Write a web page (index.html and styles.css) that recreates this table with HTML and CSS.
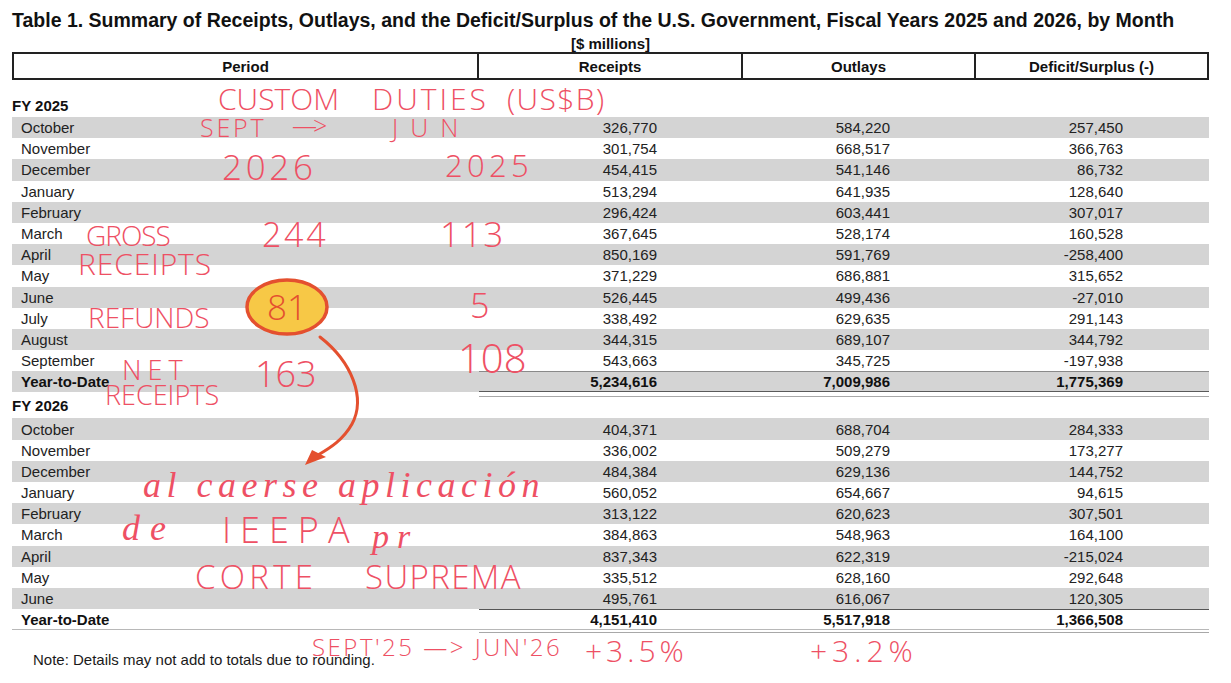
FILE: index.html
```html
<!DOCTYPE html>
<html lang="en">
<head>
<meta charset="utf-8">
<title>Table 1. Summary of Receipts, Outlays, and the Deficit/Surplus</title>
<link rel="stylesheet" href="styles.css">
</head>
<body>
<div class="page">
  <h1 class="title">Table 1. Summary of Receipts, Outlays, and the Deficit/Surplus of the U.S. Government, Fiscal Years 2025 and 2026, by Month</h1>
  <div class="units">[$ millions]</div>
  <table class="data">
    <colgroup><col class="c1"><col class="c2"><col class="c3"><col class="c4"></colgroup>
    <thead>
      <tr><th>Period</th><th>Receipts</th><th>Outlays</th><th>Deficit/Surplus (-)</th></tr>
    </thead>
    <tbody>
      <tr class="fy"><td colspan="4">FY 2025</td></tr>
      <tr class="g"><td class="m">October</td><td class="n">326,770</td><td class="n">584,220</td><td class="n">257,450</td></tr>
      <tr><td class="m">November</td><td class="n">301,754</td><td class="n">668,517</td><td class="n">366,763</td></tr>
      <tr class="g"><td class="m">December</td><td class="n">454,415</td><td class="n">541,146</td><td class="n">86,732</td></tr>
      <tr><td class="m">January</td><td class="n">513,294</td><td class="n">641,935</td><td class="n">128,640</td></tr>
      <tr class="g"><td class="m">February</td><td class="n">296,424</td><td class="n">603,441</td><td class="n">307,017</td></tr>
      <tr><td class="m">March</td><td class="n">367,645</td><td class="n">528,174</td><td class="n">160,528</td></tr>
      <tr class="g"><td class="m">April</td><td class="n">850,169</td><td class="n">591,769</td><td class="n">-258,400</td></tr>
      <tr><td class="m">May</td><td class="n">371,229</td><td class="n">686,881</td><td class="n">315,652</td></tr>
      <tr class="g"><td class="m">June</td><td class="n">526,445</td><td class="n">499,436</td><td class="n">-27,010</td></tr>
      <tr><td class="m">July</td><td class="n">338,492</td><td class="n">629,635</td><td class="n">291,143</td></tr>
      <tr class="g"><td class="m">August</td><td class="n">344,315</td><td class="n">689,107</td><td class="n">344,792</td></tr>
      <tr><td class="m">September</td><td class="n">543,663</td><td class="n">345,725</td><td class="n">-197,938</td></tr>
      <tr class="g ytd"><td class="m">Year-to-Date</td><td class="n">5,234,616</td><td class="n">7,009,986</td><td class="n">1,775,369</td></tr>
      <tr class="rule"><td></td><td class="n"></td><td class="n"></td><td class="n"></td></tr>
      <tr class="fy fy2"><td colspan="4">FY 2026</td></tr>
      <tr class="g"><td class="m">October</td><td class="n">404,371</td><td class="n">688,704</td><td class="n">284,333</td></tr>
      <tr><td class="m">November</td><td class="n">336,002</td><td class="n">509,279</td><td class="n">173,277</td></tr>
      <tr class="g"><td class="m">December</td><td class="n">484,384</td><td class="n">629,136</td><td class="n">144,752</td></tr>
      <tr><td class="m">January</td><td class="n">560,052</td><td class="n">654,667</td><td class="n">94,615</td></tr>
      <tr class="g"><td class="m">February</td><td class="n">313,122</td><td class="n">620,623</td><td class="n">307,501</td></tr>
      <tr><td class="m">March</td><td class="n">384,863</td><td class="n">548,963</td><td class="n">164,100</td></tr>
      <tr class="g"><td class="m">April</td><td class="n">837,343</td><td class="n">622,319</td><td class="n">-215,024</td></tr>
      <tr><td class="m">May</td><td class="n">335,512</td><td class="n">628,160</td><td class="n">292,648</td></tr>
      <tr class="g"><td class="m">June</td><td class="n">495,761</td><td class="n">616,067</td><td class="n">120,305</td></tr>
      <tr class="ytd ytd2"><td class="m">Year-to-Date</td><td class="n">4,151,410</td><td class="n">5,517,918</td><td class="n">1,366,508</td></tr>
      <tr class="rule rule2"><td></td><td class="n"></td><td class="n"></td><td class="n"></td></tr>
    </tbody>
  </table>
  <p class="note">Note: Details may not add to totals due to rounding.</p>

  <svg class="ink" width="1231" height="683" viewBox="0 0 1231 683" aria-hidden="true">
    <ellipse cx="287" cy="307" rx="40" ry="27" fill="#f7c846" stroke="#e4502f" stroke-width="3.5"/>
    <path d="M320 337 C 352 362, 366 398, 352 424 C 343 440, 330 448, 318 455" fill="none" stroke="#e4502f" stroke-width="3" stroke-linecap="round"/>
    <polygon points="305,465 312,450 326,457" fill="#e4502f"/>
  </svg>
  <div class="notes">
    <span class="ann a-custom">CUSTOM</span>
    <span class="ann a-duties">DUTIES</span>
    <span class="ann a-usb">(US$B)</span>
    <span class="ann a-sept">SEPT</span>
    <span class="ann a-arrow">—&gt;</span>
    <span class="ann a-jun">JUN</span>
    <span class="ann a-2026">2026</span>
    <span class="ann a-2025">2025</span>
    <span class="ann a-gross">GROSS</span>
    <span class="ann a-244">244</span>
    <span class="ann a-113">113</span>
    <span class="ann a-rec1">RECEIPTS</span>
    <span class="ann a-81">81</span>
    <span class="ann a-refunds">REFUNDS</span>
    <span class="ann a-5">5</span>
    <span class="ann a-net">NET</span>
    <span class="ann a-rec2">RECEIPTS</span>
    <span class="ann a-163">163</span>
    <span class="ann a-108">108</span>
    <span class="ann cur a-caerse">al caerse aplicación</span>
    <span class="ann cur a-de">de</span>
    <span class="ann a-ieepa">IEEPA</span>
    <span class="ann cur a-pr">pr</span>
    <span class="ann a-corte">CORTE</span>
    <span class="ann a-suprema">SUPREMA</span>
    <span class="ann a-range">SEPT'25 —&gt; JUN'26</span>
    <span class="ann a-p35">+3.5%</span>
    <span class="ann a-p32">+3.2%</span>
  </div>
</div>
</body>
</html>
```

FILE: styles.css
```css
html, body {
  margin: 0;
  background: #ffffff;
}

body {
  font-family: "Liberation Sans", Arial, sans-serif;
  color: #1a1a1a;
}

.page {
  position: relative;
  width: 1231px;
  height: 683px;
  padding: 9px 0 0 12px;
  box-sizing: border-box;
  overflow: hidden;
}

.title {
  margin: 0;
  font-size: 19.5px;
  line-height: 22px;
  font-weight: bold;
  white-space: nowrap;
  color: #111;
}

.units {
  width: 1197px;
  margin-top: 5px;
  text-align: center;
  font-size: 15px;
  line-height: 15px;
  font-weight: bold;
  color: #111;
}

.data {
  width: 1197px;
  margin-top: 1px;
  table-layout: fixed;
  border-collapse: separate;
  border-spacing: 0;
  font-size: 15px;
  color: #222;
}

.c1 { width: 467px; }
.c2 { width: 264px; }
.c3 { width: 233px; }
.c4 { width: 233px; }

.data th {
  height: 24px;
  padding: 0;
  font-weight: bold;
  font-size: 15px;
  line-height: 17px;
  color: #111;
  text-align: center;
  border-top: 2px solid #222;
  border-bottom: 2px solid #222;
  border-right: 2px solid #222;
}

.data th:first-child {
  border-left: 2px solid #222;
}

.data td {
  padding: 0;
  line-height: 17px;
  vertical-align: middle;
  white-space: nowrap;
}

.data tbody tr {
  height: 21.2px;
}

.data tr.g td {
  background: #d4d4d4;
}

.data td.m {
  padding-left: 9px;
}

.data td.n {
  text-align: right;
  padding-right: 86px;
}

.data tr.fy {
  height: 37px;
}

.data tr.fy td {
  vertical-align: bottom;
  padding-bottom: 3px;
  font-weight: bold;
  color: #111;
}

.data tr.fy2 {
  height: 21px;
}

.data tr.fy2 td {
  vertical-align: top;
  padding-bottom: 0;
  padding-top: 0;
}

.data tr.ytd td {
  font-weight: bold;
  color: #111;
}

.data tr.ytd td.n {
  border-top: 1px solid #8a8a8a;
  border-bottom: 1px solid #5a5a5a;
}

.data tr.rule {
  height: 5px;
}

.data tr.rule td {
  padding: 0;
  line-height: 0;
  font-size: 0;
}

.data tr.rule td.n {
  border-bottom: 1px solid #a8a8a8;
}

.data tr.ytd2 td {
  border-bottom: 1px solid #b8b8b8;
}

.data tr.ytd2 td.n {
  border-top: 1px solid #555;
  border-bottom: 1px solid #b8b8b8;
}

.data tr.rule2 {
  height: 3px;
}

.note {
  margin: 18px 0 0 21px;
  font-size: 15px;
  line-height: 17px;
  color: #1a1a1a;
}

/* handwritten overlay */
.ink {
  position: absolute;
  left: 0;
  top: 0;
  pointer-events: none;
}

.notes {
  position: absolute;
  left: 0;
  top: 0;
  width: 1231px;
  height: 683px;
  pointer-events: none;
}

.ann {
  position: absolute;
  font-family: "Open Sans", "DejaVu Sans", sans-serif;
  font-weight: 300;
  line-height: 1;
  white-space: nowrap;
  color: #ee5064;
}

.ann.cur {
  font-family: "Liberation Serif", "DejaVu Serif", serif;
  font-style: italic;
  font-weight: normal;
}

.a-custom { left: 218px; top: 84px; font-size: 30px; letter-spacing: 0; }
.a-duties { left: 372px; top: 84px; font-size: 30px; letter-spacing: 3px; }
.a-usb { left: 507px; top: 84px; font-size: 30px; letter-spacing: 1.4px; }
.a-sept { left: 200px; top: 115px; font-size: 25px; letter-spacing: 2.8px; }
.a-arrow { left: 292px; top: 113px; font-size: 25px; letter-spacing: -4px; }
.a-jun { left: 392px; top: 115px; font-size: 25px; letter-spacing: 12px; }
.a-2026 { left: 222px; top: 149px; font-size: 35px; letter-spacing: 3.7px; }
.a-2025 { left: 445px; top: 150px; font-size: 31px; letter-spacing: 4.3px; }
.a-gross { left: 86px; top: 221px; font-size: 28px; letter-spacing: -1px; }
.a-244 { left: 262px; top: 217px; font-size: 34px; letter-spacing: 2.7px; }
.a-113 { left: 440px; top: 216px; font-size: 35px; letter-spacing: 1.7px; }
.a-rec1 { left: 78px; top: 249px; font-size: 30px; letter-spacing: 0.9px; }
.a-81 { left: 267px; top: 289px; font-size: 35px; color: #e4502f; }
.a-refunds { left: 88px; top: 303px; font-size: 28px; letter-spacing: 0; }
.a-5 { left: 470px; top: 288px; font-size: 34px; }
.a-net { left: 122px; top: 356px; font-size: 27px; letter-spacing: 6px; }
.a-rec2 { left: 105px; top: 381px; font-size: 27px; letter-spacing: 0; }
.a-163 { left: 255px; top: 356px; font-size: 36px; letter-spacing: 0; }
.a-108 { left: 458px; top: 338px; font-size: 40px; letter-spacing: 0; }
.a-caerse { left: 143px; top: 467px; font-size: 36px; letter-spacing: 5.5px; }
.a-de { left: 122px; top: 510px; font-size: 36px; letter-spacing: 10px; }
.a-ieepa { left: 222px; top: 512px; font-size: 36px; letter-spacing: 9px; }
.a-pr { left: 372px; top: 520px; font-size: 34px; letter-spacing: 8px; }
.a-corte { left: 195px; top: 560px; font-size: 33px; letter-spacing: 4.3px; }
.a-suprema { left: 365px; top: 560px; font-size: 33px; letter-spacing: 1.4px; }
.a-range { left: 312px; top: 635px; font-size: 24px; letter-spacing: 2.5px; }
.a-p35 { left: 585px; top: 636px; font-size: 30px; letter-spacing: 4px; }
.a-p32 { left: 810px; top: 636px; font-size: 30px; letter-spacing: 5px; }
```
